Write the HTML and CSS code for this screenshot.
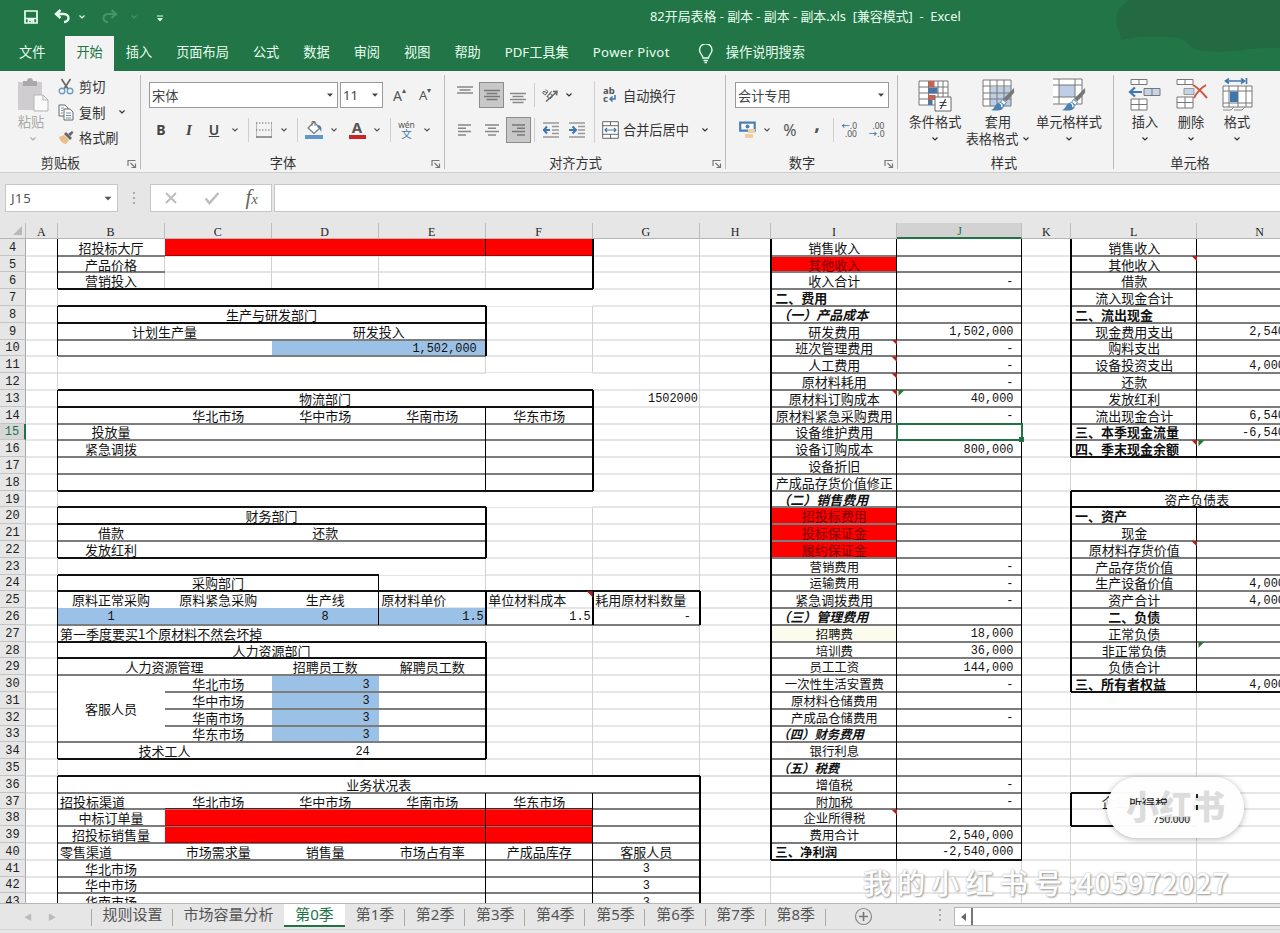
FILE: index.html
```html
<!DOCTYPE html>
<html lang="zh-CN">
<head>
<meta charset="utf-8">
<title>82开局表格 - Excel</title>
<link rel="stylesheet" href="styles.css">
</head>
<body>
<svg width="0" height="0" class="defs" aria-hidden="true">
  <symbol id="chev" viewBox="0 0 8 6"><path d="M1.5 1.5 4 4l2.500-2.500" fill="none" stroke="currentColor" stroke-width="1.200"/></symbol>
  <symbol id="tri" viewBox="0 0 8 6"><path d="M1 1.500h6L4 4.800z" fill="currentColor"/></symbol>
  <symbol id="launch" viewBox="0 0 10 10"><path d="M1 7V1.500h7.500M3.500 4l4 4M8.500 4.500v4h-4" fill="none" stroke="#777" stroke-width="1.200"/></symbol>
  <symbol id="brush" viewBox="0 0 26 26"><path d="M25 1v5l-8 9-3-3z" fill="#777"/><path d="M13 13l4 3-2 3-4-3z" fill="#fff" stroke="#4a86b8"/><path d="M1 24c4-1 4-7 9-8 3 0 5 2 4 5-1 4-9 4-13 3z" fill="#4a80b4"/><path d="M10 17c2 0 3 2 2 4" stroke="#fff" stroke-width="1.500" fill="none"/></symbol>
</svg>
<div class="app">
  <header class="title">
    <svg class="smudge" viewBox="0 0 190 60"><path d="M28 10 38 0h152v48c-30-2-45 6-75 3-20-2-15-12-28-13-22-3-38-2-56 2 0-10-8-14-3-30z" fill="#236a43"/></svg>
    <div class="quick">
      <svg width="14" height="14" viewBox="0 0 14 14"><path d="M1 1h12v12H1zM1 8.500h12M4.500 13v-3h5v3M7.500 10.500V13" fill="none" stroke="#e8fff0" stroke-width="1.700"/></svg>
      <svg width="17" height="15" viewBox="0 0 17 15"><path d="M2 5h8c6 0 6 8 0 8M6.500 1 2 5l4.500 4" fill="none" stroke="#e8fff0" stroke-width="2.400"/></svg>
      <svg class="c1" width="8" height="6"><use href="#chev"/></svg>
      <svg width="17" height="15" viewBox="0 0 17 15"><path d="M15 5H7c-6 0-6 8 0 8M10.500 1 15 5l-4.500 4" fill="none" stroke="#47946a" stroke-width="2.200"/></svg>
      <svg class="c2" width="8" height="6"><use href="#chev"/></svg>
      <svg width="8" height="7" viewBox="0 0 8 7"><path d="M1 1h6" stroke="#e8fff0"/><path d="M1 3h6L4 6.500z" fill="#e8fff0"/></svg>
    </div>
    <div class="doc">82开局表格 - 副本 - 副本 - 副本.xls&nbsp; [兼容模式]&nbsp; -&nbsp; Excel</div>
  </header>
  <nav class="tabs">
    <span>文件</span><span class="on">开始</span><span>插入</span><span>页面布局</span><span>公式</span><span>数据</span><span>审阅</span><span>视图</span><span>帮助</span><span>PDF工具集</span><span class="pp">Power Pivot</span>
    <svg width="16" height="20" viewBox="0 0 16 20"><path d="M5 14c0-3-3.500-4-3.500-8a6 6 0 0 1 12.500 0c0 4-3.500 5-3.500 8zM5.500 16.500h4.500M6.500 18.500h2.500" fill="none" stroke="#e8fff0" stroke-width="1.400"/></svg>
    <span>操作说明搜索</span>
  </nav>

  <section class="ribbon">
    <div class="group g-clip">
      <div class="body">
        <div class="big paste">
          <svg width="34" height="36" viewBox="0 0 34 36"><path d="M2 4h24v28H2z" fill="#cfcdd0"/><path d="M7 3h4c0-4 6-4 6 0h4v5H7z" fill="#a9a9a9"/><path d="M18 17h9l5 5v11H18z" fill="#fafafa" stroke="#b5b2b5"/><path d="M27 17v5h5" fill="none" stroke="#b5b2b5"/></svg>
          <b>粘贴</b><svg width="8" height="6"><use href="#chev"/></svg>
        </div>
        <div class="clips">
          <div><svg width="16" height="17" viewBox="0 0 16 17"><path d="M3.500 1 10 11M12.500 1 6 11" stroke="#666" stroke-width="1.600"/><circle cx="4" cy="13" r="2.800" fill="none" stroke="#6d9cc4" stroke-width="1.400"/><circle cx="12" cy="13" r="2.800" fill="none" stroke="#6d9cc4" stroke-width="1.400"/></svg>剪切</div>
          <div><svg width="16" height="17" viewBox="0 0 16 17"><path d="M1 1h6l3 3v8H1z" fill="#fff" stroke="#666"/><path d="M6 5h6l3 3v8H6z" fill="#fff" stroke="#666"/><path d="M3 4h3M3 6.500h2M3 9h2M8 9h5M8 11.500h5M8 14h5" stroke="#6d8fb5"/></svg>复制<svg class="far" width="8" height="6"><use href="#chev"/></svg></div>
          <div><svg width="16" height="15" viewBox="0 0 16 15"><path d="M1 7 6 5l5 5-3 4c-3 0-6-3-7-7z" fill="#eabf85"/><path d="M6 4l2-2 6 6-2 2z" fill="#666"/><path d="m10 4 4-3 1.500 1.500-3 3.500z" fill="#666"/></svg>格式刷</div>
        </div>
      </div>
      <div class="label"><span>剪贴板</span><svg width="10" height="10"><use href="#launch"/></svg></div>
    </div>

    <div class="group g-font">
      <div class="body stack">
        <div class="row1">
          <div class="combo fam">宋体<svg width="8" height="6"><use href="#tri"/></svg></div>
          <div class="combo size">11<svg width="8" height="6"><use href="#tri"/></svg></div>
          <div class="grow">A<sup>▴</sup></div><div class="grow shrink">A<sup>▾</sup></div>
        </div>
        <div class="row2 font-tools">
          <b class="fmt">B</b><b class="fmt it">I</b><b class="fmt un">U</b><svg width="8" height="6"><use href="#chev"/></svg><i class="sep"></i>
          <svg width="16" height="16" viewBox="0 0 16 16"><path d="M.5 0v15M15.500 0v15" stroke="#bbb"/><path d="M0 1h16M0 8h16" stroke="#777" stroke-dasharray="1.500 1.500"/><path d="M0 15h16" stroke="#777" stroke-width="1.500"/></svg>
          <svg width="8" height="6"><use href="#chev"/></svg><i class="sep"></i>
          <svg width="18" height="20" viewBox="0 0 18 20"><path d="m3 8 6-6 6 6-6 5.500z" fill="#fff" stroke="#777" stroke-width="1.200"/><path d="M7 6V1.500h3V6" fill="none" stroke="#777"/><path d="M13.500 5c3 1 3.500 4 2.500 7-1-3-2-4-4-5z" fill="#4a80b4"/><path d="M0 15h18v4H0z" fill="#5f97c8"/></svg>
          <svg width="8" height="6"><use href="#chev"/></svg>
          <b class="fcolor">A</b>
          <svg width="8" height="6"><use href="#chev"/></svg><i class="sep"></i>
          <div class="wen"><span>wén</span><em>文</em></div>
          <svg width="8" height="6"><use href="#chev"/></svg>
        </div>
      </div>
      <div class="label"><span>字体</span><svg width="10" height="10"><use href="#launch"/></svg></div>
    </div>

    <div class="group g-align">
      <div class="body">
        <div class="stack aleft">
          <div class="row1 al1">
            <svg class="up" width="16" height="14" viewBox="0 0 16 14"><path d="M0 2h16M2.500 5h11M0 8h16" stroke="#888" stroke-width="1.400"/></svg>
            <span class="hit"><svg width="16" height="14" viewBox="0 0 16 14"><path d="M0 2.500h16M2.500 5.500h11M0 8.500h16M2.500 11.500h11" stroke="#777" stroke-width="1.400"/></svg></span>
            <svg class="dn" width="16" height="14" viewBox="0 0 16 14"><path d="M0 2.500h16M2.500 5.500h11M0 8.500h16M2.500 11.500h11" stroke="#888" stroke-width="1.400"/></svg>
            <i class="sep"></i>
            <svg width="18" height="16" viewBox="0 0 18 16"><text x="0" y="9" transform="rotate(40 5 8)" class="ab">ab</text><path d="M5 14.500 15.500 5M12 4.500l4-.2-.5 4" fill="none" stroke="#666" stroke-width="1.500"/></svg>
            <svg width="8" height="6"><use href="#chev"/></svg>
          </div>
          <div class="row2 al2">
            <svg width="14" height="12" viewBox="0 0 14 12"><path d="M0 1h13M0 4.300h8M0 7.600h13M0 11h8" stroke="#888" stroke-width="1.500"/></svg>
            <svg width="14" height="12" viewBox="0 0 14 12"><path d="M0 1h14M3 4.300h8M0 7.600h14M3 11h8" stroke="#888" stroke-width="1.500"/></svg>
            <span class="hit"><svg width="14" height="12" viewBox="0 0 14 12"><path d="M1 1h13M6 4.300h8M1 7.600h13M6 11h8" stroke="#777" stroke-width="1.500"/></svg></span>
            <i class="sep"></i>
            <svg width="16" height="16" viewBox="0 0 16 16"><path d="M0 1h16M9 4.500h7M9 8h7M9 11.500h7M0 15h16" stroke="#999" stroke-width="1.500"/><path d="M0 8h7M4 4.500 .8 8 4 11.500" fill="none" stroke="#3f76ad" stroke-width="2"/></svg>
            <svg width="16" height="16" viewBox="0 0 16 16"><path d="M0 1h16M9 4.500h7M9 8h7M9 11.500h7M0 15h16" stroke="#999" stroke-width="1.500"/><path d="M0 8h7M3.500 4.500 7 8l-3.500 3.500" fill="none" stroke="#3f76ad" stroke-width="2"/></svg>
          </div>
        </div>
        <i class="vsep"></i>
        <div class="stack aright">
          <div class="row1 gap"><svg width="17" height="18" viewBox="0 0 17 18"><text x="1" y="8" class="ab2">ab</text><text x="1" y="16" class="ab2">c</text><path d="M13 9v4H8M10.500 10.500 8 13l2.500 2.500" fill="none" stroke="#3f76ad" stroke-width="1.500"/></svg>自动换行</div>
          <div class="row2 gap"><svg width="17" height="18" viewBox="0 0 17 18"><path d="M.7.700h15.600v16.600H.700zM.7 4.700h15.600M.7 13.300h15.600M8.500.700v4M8.500 13.300v4" fill="#fff" stroke="#666"/><path d="M3 9h11M5 7 3 9l2 2M12 7l2 2-2 2" fill="none" stroke="#3f76ad" stroke-width="1.200"/></svg>合并后居中<svg class="far" width="8" height="6"><use href="#chev"/></svg></div>
        </div>
      </div>
      <div class="label"><span>对齐方式</span><svg width="10" height="10"><use href="#launch"/></svg></div>
    </div>

    <div class="group g-num">
      <div class="body stack">
        <div class="row1"><div class="combo numf">会计专用<svg width="8" height="6"><use href="#tri"/></svg></div></div>
        <div class="row2 num-tools">
          <svg width="17" height="18" viewBox="0 0 17 18"><path d="M1.200 1.700h14.500v8H1.200z" fill="#fff" stroke="#4a80b4" stroke-width="2.200"/><circle cx="8.500" cy="5.500" r="2" fill="#4a80b4"/><path d="M9 8h7v4H9zM6 13h8v4H6z" fill="#efcf9e"/></svg>
          <svg width="8" height="6"><use href="#chev"/></svg><span class="pct">%</span><b class="com">,</b><i class="sep"></i>
          <div class="dec"><span><em>←</em>.0</span><span>.00</span></div>
          <div class="dec"><span>.00</span><span><em>→</em>.0</span></div>
        </div>
      </div>
      <div class="label"><span>数字</span><svg width="10" height="10"><use href="#launch"/></svg></div>
    </div>

    <div class="group g-style">
      <div class="body">
        <div class="big"><svg width="34" height="36" viewBox="0 0 34 36"><path d="M1 3h29v24H1zM1 9h29M1 15h29M1 21h29M10.500 3v24M20 3v24M25 3v24" fill="#fff" stroke="#777"/><path d="M10.500 3h6v6h-6zM10.500 17h7v5h-7z" fill="#c8604c"/><path d="M10.500 9.500h9v6h-9zM10.500 22h4v5h-4z" fill="#4a74a6"/><path d="M17 19h16v14H17z" fill="#fff" stroke="#666"/><path d="M21.500 24.500h7M21.500 27.500h7M27.500 21l-5 10" stroke="#444" stroke-width="1.200"/></svg><b>条件格式</b><svg width="8" height="6"><use href="#chev"/></svg></div>
        <div class="big"><svg width="34" height="36" viewBox="0 0 34 36"><path d="M2 2h28v26H2z" fill="#fff"/><path d="M9 9h21v19H9z" fill="#bccfe5"/><path d="M2 2h28v26H2zM2 8h28M2 15h28M2 21h28M9 2v26M16 2v26M23 2v26" fill="none" stroke="#777"/><use href="#brush" x="9" y="9" width="25" height="25"/></svg><b>套用</b><b class="l2">表格格式 <svg width="8" height="6"><use href="#chev"/></svg></b></div>
        <div class="big"><svg width="34" height="36" viewBox="0 0 34 36"><path d="M1 1h29v25H1z" fill="#fff"/><path d="M7 7h16v12H7z" fill="#bccfe5"/><path d="M1 1h29v25H1M1 7h29M1 19h29M7 1v25M23 1v25" fill="none" stroke="#777"/><use href="#brush" x="9" y="9" width="25" height="25"/></svg><b>单元格样式</b><svg width="8" height="6"><use href="#chev"/></svg></div>
      </div>
      <div class="label"><span>样式</span></div>
    </div>

    <div class="group g-cells">
      <div class="body">
        <div class="big"><svg width="34" height="36" viewBox="0 0 34 36"><path d="M3 1.500h16v5H3zM11 1.500v5M3 21h16v11H3zM3 26.500h16M11 21v11" fill="#fff" stroke="#777"/><path d="M16 10.500h16v7H16zM24 10.500v7" fill="#c4d5e7" stroke="#777"/><path d="M2 14h12M7 9.500 2 14l5 4.500" fill="none" stroke="#3f76ad" stroke-width="2.200"/></svg><b>插入</b><svg width="8" height="6"><use href="#chev"/></svg></div>
        <div class="big"><svg width="34" height="36" viewBox="0 0 34 36"><path d="M3 1.500h16v5H3zM11 1.500v5M3 19h16v11H3zM3 24.500h16M11 19v11" fill="#fff" stroke="#777"/><path d="M10 10.500h10v6H10z" fill="#c4d5e7" stroke="#999"/><path d="M19 7c5 3 9 7 14 13M32 7c-5 3-9 7-12 13" fill="none" stroke="#c9573f" stroke-width="2"/></svg><b>删除</b><svg width="8" height="6"><use href="#chev"/></svg></div>
        <div class="big"><svg width="34" height="36" viewBox="0 0 34 36"><path d="M6 3h18M9 .500 5.500 3 9 5.500M21 .500 24.500 3 21 5.500M26.500 0v6" fill="none" stroke="#3f76ad" stroke-width="1.600"/><path d="M3 8h29v21H3zM3 13h29M3 25h29M9 8v21M18 8v21M26 8v21" fill="#fff" stroke="#777"/><path d="M10 13.500h8V24h-8z" fill="#3f76ad"/><path d="M3 32h8l3-3M14 32h8l3-3" fill="none" stroke="#888"/></svg><b>格式</b><svg width="8" height="6"><use href="#chev"/></svg></div>
      </div>
      <div class="label"><span>单元格</span></div>
    </div>
  </section>

  <section class="fbar">
    <div class="namebox">J15<svg width="10" height="7"><use href="#tri"/></svg></div>
    <div class="dots"><i></i><i></i><i></i></div>
    <div class="fbtns">
      <svg width="14" height="14" viewBox="0 0 14 14"><path d="M2 2l10 10M12 2 2 12" stroke="#bdbdbd" stroke-width="2"/></svg>
      <svg width="16" height="14" viewBox="0 0 16 14"><path d="M1.500 7.500 5.500 12 14.500 2" fill="none" stroke="#bdbdbd" stroke-width="2.600"/></svg>
      <span class="fx">f<small>x</small></span>
    </div>
    <div class="finput"></div>
  </section>

  <main class="sheet" id="sheet"></main>

  <footer class="sheets">
    <span class="nav">◀</span><span class="nav">▶</span>
    <span class="tab t1">规则设置</span><span class="tab t2">市场容量分析</span><span class="tab cur">第0季</span><span class="tab">第1季</span><span class="tab">第2季</span><span class="tab">第3季</span><span class="tab">第4季</span><span class="tab">第5季</span><span class="tab">第6季</span><span class="tab">第7季</span><span class="tab">第8季</span>
    <svg class="plus" width="19" height="19" viewBox="0 0 19 19"><circle cx="9.500" cy="9.500" r="8" fill="none" stroke="#888" stroke-width="1.200"/><path d="M5 9.500h9M9.500 5v9" stroke="#777" stroke-width="1.600"/></svg>
    <div class="dots"><i></i><i></i><i></i></div>
    <div class="scroll"><svg width="5" height="8" viewBox="0 0 5 8"><path d="M5 0v8L0 4z" fill="#666"/></svg><i></i></div>
  </footer>

  <div class="wm">我的小红书号<span>:405972027</span></div>
  <div class="pill"><strong>小红书</strong><span class="f1">所得税</span><span class="f2">750,000</span><i class="m1"></i></div>
</div>
<script src="sheet.js"></script>
</body>
</html>
```
FILE: sheet.js
```js
const sheet = document.getElementById('sheet');
const COLS = ['#', 'A', 'B', 'C', 'D', 'E', 'F', 'G', 'H', 'I', 'J', 'K', 'L', 'N'];
const ci = c => COLS.indexOf(c) + 1;
const ri = r => r - 2;

function put(c1, r1, c2, r2, cls, text) {
  const el = document.createElement('div');
  el.className = cls;
  el.style.gridArea = `${ri(r1)} / ${ci(c1)} / ${ri(r2) + 1} / ${ci(c2) + 1}`;
  if (text !== undefined) el.textContent = text;
  sheet.appendChild(el);
}
const fill = (c1, r1, c2, r2, cls) => put(c1, r1, c2, r2, 'fill ' + cls);
const h = (rows, c1, c2, cls) => [].concat(rows).forEach(r => put(c1, r, c2, r, 'h ' + cls));
const v = (c, r1, r2, cls) => put(c, r1, c, r2, 'v ' + cls);
const t = (c, r, text, cls = '', c2 = c, r2 = r) => put(c, r, c2, r2, 'cell ' + cls, text);
const range = (a, b) => Array.from({ length: b - a + 1 }, (_, i) => a + i);

// default gridlines
h(range(4, 42), 'A', 'N', 'grid');
COLS.slice(1, 13).forEach(c => v(c, 4, 43, 'grid'));

// areas without gridlines
[['B', 7, 'F', 7], ['B', 8, 'E', 11], ['B', 12, 'F', 19], ['B', 20, 'E', 23], ['B', 24, 'D', 24],
 ['B', 25, 'D', 25], ['B', 27, 'E', 35], ['B', 36, 'G', 43], ['L', 19, 'N', 19], ['B', 4, 'B', 6]]
  .forEach(a => fill(...a, 'white'));
h([7, 11, 18, 22, 34], 'B', 'E', 'grid');
v('E', 11, 11, 'grid'); v('E', 23, 23, 'grid'); v('E', 27, 27, 'grid'); v('E', 35, 35, 'grid');
['A'].forEach(c => v(c, 4, 43, 'grid'));
v('B', 5, 6, 'grid');

// coloured cells
fill('C', 4, 'F', 4, 'red'); fill('D', 10, 'E', 10, 'blue');
fill('B', 26, 'E', 26, 'blue'); fill('D', 30, 'D', 33, 'blue');
fill('C', 38, 'F', 39, 'red'); fill('I', 5, 'I', 5, 'red'); fill('I', 20, 'I', 22, 'red');
fill('I', 27, 'I', 27, 'cream');

// table borders
h([4, 5], 'B', 'B', 'g'); h(4, 'C', 'F', 'dr'); v('E', 4, 4, 'k1'); h(6, 'B', 'F', 'k');
v('A', 4, 6, 'k1'); v('F', 4, 6, 'k2');
h([7, 8], 'B', 'E', 'k'); h([9, 10], 'B', 'E', 'g'); v('A', 8, 10, 'k1'); v('E', 8, 10, 'k2');
h([12, 13, 18], 'B', 'F', 'k'); h([14, 15, 16, 17], 'B', 'F', 'g');
v('A', 13, 18, 'k1'); v('E', 14, 18, 'k1'); v('F', 13, 18, 'k2');
h([19, 20, 22], 'B', 'E', 'k'); h(21, 'B', 'E', 'g'); v('A', 20, 22, 'k1'); v('E', 20, 22, 'k2');
h(23, 'B', 'D', 'k'); h(24, 'B', 'G', 'k'); h(26, 'B', 'G', 'g'); v('A', 24, 26, 'k1');
v('D', 24, 26, 'k1'); v('E', 25, 26, 'k2'); v('F', 25, 26, 'k2'); v('G', 25, 26, 'k2');
h([27, 28, 34], 'B', 'E', 'k'); h([29, 33], 'B', 'E', 'g'); h([30, 31, 32], 'C', 'E', 'g');
v('A', 27, 34, 'k1'); v('E', 28, 34, 'k2');
h(35, 'B', 'G', 'k'); h(range(36, 42), 'B', 'G', 'g'); h([37, 38, 39], 'C', 'F', 'dr');
v('A', 36, 43, 'k1'); v('E', 37, 43, 'k1'); v('F', 37, 43, 'k1'); v('G', 36, 43, 'k2');
h(range(4, 39), 'I', 'J', 'g'); h(40, 'I', 'J', 'k');
v('H', 4, 40, 'k2'); v('I', 4, 40, 'k1'); v('J', 4, 40, 'k1');
h(range(4, 15), 'L', 'N', 'g'); h([16, 18, 19, 30], 'L', 'N', 'k'); h(range(20, 29), 'L', 'N', 'g');
v('K', 4, 16, 'k2'); v('L', 4, 16, 'k1'); v('K', 19, 30, 'k2'); v('L', 20, 30, 'k1');
h([36, 38], 'L', 'L', 'k'); v('K', 37, 38, 'k2');

// left-hand tables
t('B', 4, '招投标大厅'); t('B', 5, '产品价格'); t('B', 6, '营销投入');
t('B', 8, '生产与研发部门', '', 'E'); t('B', 9, '计划生产量', '', 'C'); t('D', 9, '研发投入', '', 'E');
t('E', 10, '1,502,000', 'num');
t('G', 13, '1502000', 'num tight');
t('B', 13, '物流部门', '', 'F');
[14, 37].forEach(r => ['华北市场', '华中市场', '华南市场', '华东市场'].forEach((s, i) => t('CDEF'[i], r, s)));
t('B', 15, '投放量'); t('B', 16, '紧急调拨');
t('B', 20, '财务部门', '', 'E'); t('B', 21, '借款'); t('D', 21, '还款'); t('B', 22, '发放红利');
t('B', 24, '采购部门', '', 'D'); t('B', 25, '原料正常采购'); t('C', 25, '原料紧急采购'); t('D', 25, '生产线');
t('E', 25, '原材料单价', 'left'); t('F', 25, '单位材料成本', 'left'); t('G', 25, '耗用原材料数量', 'left');
t('B', 26, '1', 'mid'); t('D', 26, '8', 'mid'); t('E', 26, '1.5', 'num tight'); t('F', 26, '1.5', 'num tight'); t('G', 26, '-', 'num');
t('B', 27, '第一季度要买1个原材料不然会坏掉', 'left', 'D');
t('B', 28, '人力资源部门', '', 'E'); t('B', 29, '人力资源管理', '', 'C'); t('D', 29, '招聘员工数'); t('E', 29, '解聘员工数');
['华北市场', '华中市场', '华南市场', '华东市场'].forEach((s, i) => { t('C', 30 + i, s); t('D', 30 + i, '3', 'num'); });
t('B', 30, '客服人员', '', 'B', 33); t('B', 34, '技术工人', '', 'C'); t('D', 34, '24', 'num');
t('B', 36, '业务状况表', '', 'G'); t('B', 37, '招投标渠道', 'left'); t('B', 38, '中标订单量'); t('B', 39, '招投标销售量');
t('B', 40, '零售渠道', 'left'); t('C', 40, '市场需求量'); t('D', 40, '销售量'); t('E', 40, '市场占有率'); t('F', 40, '产成品库存'); t('G', 40, '客服人员');
['华北市场', '华中市场', '华南市场'].forEach((s, i) => { t('B', 41 + i, s); t('G', 41 + i, '3', 'mid'); });

// income statement
[['销售收入'], ['其他收入', '', 'onred'], ['收入合计', '-'], ['二、费用', '', 'head'], ['（一）产品成本', '', 'sub'],
 ['研发费用', '1,502,000'], ['班次管理费用', '-'], ['人工费用', '-'], ['原材料耗用', '-'], ['原材料订购成本', '40,000'],
 ['原材料紧急采购费用', '-'], ['设备维护费用'], ['设备订购成本', '800,000'], ['设备折旧'], ['产成品存货价值修正'],
 ['（二）销售费用', '', 'sub'], ['招投标费用', '', 'onred'], ['投标保证金', '', 'onred'], ['履约保证金', '', 'onred'],
 ['营销费用', '-', 'sm'], ['运输费用', '-', 'sm'], ['紧急调拨费用', '-'], ['（三）管理费用', '', 'sub'], ['招聘费', '18,000', 'sm'],
 ['培训费', '36,000', 'sm'], ['员工工资', '144,000', 'sm'], ['一次性生活安置费', '-', 'sm'], ['原材料仓储费用', '', 'sm'],
 ['产成品仓储费用', '-', 'sm'], ['（四）财务费用', '', 'sub sm'], ['银行利息', '', 'sm'], ['（五）税费', '', 'sub sm'],
 ['增值税', '-', 'sm'], ['附加税', '-', 'sm'], ['企业所得税', '', 'sm'], ['费用合计', '2,540,000', 'sm'], ['三、净利润', '-2,540,000', 'head sm']]
  .forEach(([name, val, cls], i) => { t('I', 4 + i, name, cls); if (val) t('J', 4 + i, val, 'num'); });

// cash flow and balance sheet
[['销售收入'], ['其他收入'], ['借款'], ['流入现金合计'], ['二、流出现金', '', 'head'], ['现金费用支出', '2,540,000'], ['购料支出'],
 ['设备投资支出', '4,000,000'], ['还款'], ['发放红利'], ['流出现金合计', '6,540,000'], ['三、本季现金流量', '-6,540,000', 'head'], ['四、季末现金余额', '', 'head']]
  .forEach(([name, val, cls], i) => { t('L', 4 + i, name, cls); if (val) t('N', 4 + i, val, 'num'); });
t('L', 19, '资产负债表', '', 'N');
[['一、资产', '', 'head'], ['现金'], ['原材料存货价值'], ['产品存货价值'], ['生产设备价值', '4,000,000'], ['资产合计', '4,000,000'],
 ['二、负债', '', 'bold'], ['正常负债'], ['非正常负债'], ['负债合计'], ['三、所有者权益', '4,000,000', 'head']]
  .forEach(([name, val, cls], i) => { t('L', 20 + i, name, cls); if (val) t('N', 20 + i, val, 'num'); });
t('L', 37, '企业所得税');

// comment and error markers
[['I', 10], ['I', 11], ['I', 12], ['I', 13], ['I', 38], ['L', 5], ['L', 16], ['L', 22], ['F', 25]]
  .forEach(([c, r]) => put(c, r, c, r, 'mark note'));
[['J', 13], ['N', 16], ['N', 28]].forEach(([c, r]) => put(c, r, c, r, 'mark err'));
put('J', 15, 'J', 15, 'selection');

// headers
put('#', 3, '#', 3, 'ch corner');
COLS.slice(1).forEach(c => put(c, 3, c, 3, 'ch' + (c === 'J' ? ' act' : '') + (c === 'B' || c === 'K' || c === 'A' ? ' bar' : ''), c));
range(4, 43).forEach(r => put('#', r, '#', r, 'rh' + (r === 15 ? ' act' : ''), r));
```
FILE: styles.css
```css
* { box-sizing: border-box; }
body { margin: 0; font-family: "Noto Sans", "Noto Sans CJK SC", sans-serif; font-size: 13.2px; color: #333; }
svg { display: block; flex: none; }
.defs { position: absolute; }
.app { position: relative; width: 1280px; height: 933px; overflow: hidden; background: #e6e6e6; display: flex; flex-direction: column; }

.title { position: relative; height: 36px; background: #217546; flex: none; color: #e8fff0; display: flex; align-items: center; }
.smudge { position: absolute; right: 0; top: 0; width: 190px; height: 60px; z-index: 1; }
.quick { display: flex; align-items: center; padding: 0 0 3px 24px; width: 650px; }
.quick svg:nth-child(2) { margin-left: 16px; }
.quick .c1 { margin: 0 15px 0 7px; }
.quick .c2 { margin: 0 14px 0 12px; color: #47946a; }
.quick svg:last-child { margin-left: 4px; margin-top: 4px; }
.doc { font-size: 12.9px; white-space: nowrap; padding-bottom: 5px; }

.tabs { height: 35px; background: #217546; flex: none; display: flex; align-items: stretch; color: #e8fff0; padding-left: 8px; }
.tabs span { padding: 0 12px; line-height: 33px; white-space: nowrap; font-size: 13.2px; }
.tabs span:first-child { padding-right: 20px; padding-left: 11px; }
.tabs .on { background: #f3f3f3; color: #217546; padding: 0 11px; }
.tabs svg { margin: 8px 0 0 16px; }
.tabs .pp { letter-spacing: .35px; }

.ribbon { height: 102px; flex: none; display: flex; background: #f3f3f3; border-bottom: 1px solid #cfcfcf; }
.group { position: relative; display: flex; flex-direction: column; flex: none; padding-top: 3px; color: #333; }
.group:not(.g-cells)::after { content: ""; position: absolute; right: 0; top: 4px; height: 94px; width: 1px; background: #bbb; }
.g-clip { width: 141px; } .g-font { width: 304px; } .g-align { width: 281px; } .g-num { width: 172px; } .g-style { width: 216px; } .g-cells { width: 166px; }
.body { height: 78px; display: flex; }
.stack { display: flex; flex-direction: column; }
.label { height: 20px; display: flex; align-items: center; padding-right: 4px; }
.label span { flex: 1; text-align: center; white-space: nowrap; padding-left: 0; }
.label svg { margin-top: 3px; }
.g-clip .label span, .g-font .label span, .g-align .label span, .g-num .label span { padding-right: 6px; }
.g-cells .label { padding-right: 14px; }
.row1 { height: 42px; display: flex; align-items: center; }
.row2 { height: 27px; display: flex; align-items: center; }
.gap { gap: 4px; padding-left: 7px; white-space: nowrap; }
.gap .far { margin-left: 8px; }
.big { display: flex; flex-direction: column; align-items: center; padding-top: 4px; }
.big b { font-weight: 400; line-height: 18px; height: 18px; white-space: nowrap; margin-top: -1px; }
.big > svg:last-child { margin-top: 5px; }
.big .l2 { display: flex; align-items: center; gap: 4px; }
.paste { width: 58px; padding-left: 8px; color: #aaa; }
.paste b { padding-right: 4px; }
.clips { display: flex; flex-direction: column; }
.clips div { height: 25.500px; display: flex; align-items: center; gap: 5px; }
.clips .far { margin-left: 8px; }

.combo { height: 26px; border: 1px solid #999; background: #fff; display: flex; align-items: center; justify-content: space-between; padding: 0 3px 0 2px; color: #444; }
.fam { width: 189px; margin-left: 8px; } .size { width: 43px; margin: 0 10px 0 2px; } .numf { width: 154px; margin-left: 9px; }
.grow { width: 26px; color: #555; font-size: 14px; display: flex; }
.grow sup { font-size: 8px; line-height: 8px; }
.shrink { font-size: 13px; }
.font-tools { display: grid; justify-items: center; margin-left: 8px; grid-template-columns: 24px 32px 18px 24px 3px 28px 12px 15px 18px 22px 24px 16px 10px 23px 18px; color: #555; }
.fmt { font-size: 14px; color: #444; line-height: 18px; }
.it { font-style: italic; font-family: "Liberation Serif", serif; font-size: 15px; } .un { text-decoration: underline; font-weight: 600; }
.sep { width: 1px; height: 24px; background: #cfcfcf; }
.vsep { width: 1px; height: 62px; background: #cfcfcf; margin-top: 7px; }
.fcolor { width: 17px; border-bottom: 4px solid #cc2222; text-align: center; line-height: 15px; font-size: 15px; color: #555; }
.wen { display: flex; flex-direction: column; align-items: center; font-size: 8.500px; line-height: 8px; color: #555; }
.wen em { font-style: normal; color: #3f76ad; font-size: 10.500px; line-height: 10px; }
.aleft { width: 149px; padding-left: 9px; }
.al1, .al2 { display: grid; justify-items: center; }
.al1 { grid-template-columns: 22px 31px 22px 11px 20px 18px; }
.al2 { grid-template-columns: 22px 32px 20px 13px 20px 32px; }
.hit { width: 25px; height: 26px; background: #c8c8c8; border: 1px solid #8c8c8c; display: grid; place-items: center; }
.up { margin-bottom: 6px; } .dn { margin-top: 6px; }
.ab { font: 10px "Noto Sans", sans-serif; fill: #555; }
.ab2 { font: bold 9.500px "Noto Sans", sans-serif; fill: #555; }
.num-tools { display: grid; justify-items: center; margin-left: 9px; grid-template-columns: 24px 16px 30px 24px 9px 23px 32px; color: #555; }
.pct { font-size: 16px; } .com { font-size: 20px; line-height: 10px; margin-top: -14px; }
.dec { display: flex; flex-direction: column; align-items: flex-end; font-size: 8.500px; line-height: 8px; width: 15px; }
.dec span { white-space: nowrap; display: flex; }
.dec em { color: #3f76ad; font-style: normal; font-weight: 700; }
.g-style .big:nth-child(1) { width: 74px; } .g-style .big:nth-child(2) { width: 52px; } .g-style .big:nth-child(3) { width: 90px; }
.g-cells .body { padding-left: 8px; } .g-cells .big { width: 46px; }

.fbar { height: 50px; flex: none; display: flex; align-items: center; padding-left: 5px; }
.namebox, .fbtns, .finput { height: 28px; background: #fff; border: 1px solid #c6c6c6; display: flex; align-items: center; }
.namebox { width: 113px; padding: 0 4px 0 5px; justify-content: space-between; color: #555; letter-spacing: .5px; }
.dots { width: 32px; display: flex; flex-direction: column; align-items: center; gap: 3px; }
.dots i { width: 2px; height: 2px; background: #aaa; }
.fbtns { width: 122px; justify-content: space-between; padding: 0 13px; }
.fx { font: italic 21px "Liberation Serif", serif; color: #666; line-height: 20px; } .fx small { font-size: 15px; }
.finput { margin-left: 2px; flex: 1; border-right: 0; }

.sheet { height: 680px; flex: none; overflow: hidden; background: #fff; display: grid; justify-content: start; align-content: start;
  grid-template-columns: 26px 31.500px 107.200px 107px 107px 107px 107px 107.300px 71.300px 126.200px 125px 48.500px 126.500px 125px;
  grid-template-rows: 16px 16.700px repeat(39, 16.790px);
  font-family: "Noto Sans CJK SC", sans-serif; font-size: 13px; color: #111; }
.sheet > div { min-width: 0; min-height: 0; }
.fill.white { background: #fff; } .fill.red { background: #fe0000; } .fill.blue { background: #9bc2e6; } .fill.cream { background: #fbfbee; }
.h { height: 2px; align-self: end; margin-bottom: -1px; }
.v { width: 2px; justify-self: end; margin-right: -1px; }
.h.grid { background: #e6e6e6; } .v.grid { width: 1px; background: #d2d2d2; margin-right: 0; }
.h.g { background: #7c7c7c; } .h.k { background: #111; } .h.dr { background: #a00000; height: 1px; margin-bottom: 0; }
.v.k1 { width: 1px; background: #000; margin-right: 0; } .v.k2 { background: #000; }
.cell { display: flex; align-items: center; justify-content: center; white-space: nowrap; line-height: 16px; padding-top: 1px; }
.left { justify-content: flex-start; padding-left: 2.500px; }
.num, .mid { font-family: "Liberation Mono", monospace; font-size: 11.900px; padding-top: 2px; }
.num { justify-content: flex-end; padding-right: 9px; }
.num.tight { padding-right: 2px; }
.head { font-weight: 700; justify-content: flex-start; padding-left: 4px; }
.bold { font-weight: 700; }
.sub { font-weight: 700; font-style: italic; justify-content: flex-start; padding-left: 6px; }
.sm { font-size: 12.400px; }
.onred { color: #7a0000; }
.mark { width: 6px; height: 6px; }
.note { justify-self: end; background: #b01e1e; clip-path: polygon(0 0, 100% 0, 100% 100%); }
.err { background: #1e7a2c; clip-path: polygon(0 0, 100% 0, 0 100%); margin-left: 1px; }
.selection { border: 2px solid #217346; margin: -1px -1px -1px -1px; position: relative; }
.selection::after { content: ""; position: absolute; right: -3px; bottom: -3px; width: 5px; height: 5px; background: #217346; }
.ch, .rh { background: #e6e6e6; display: flex; align-items: center; justify-content: center; font-size: 12px; color: #222; }
.ch { font-family: "Liberation Serif", serif; border-right: 1px solid #bdbdbd; border-bottom: 1px solid #b5b5b5; padding-top: 3px; }
.ch.act { background: #d2d2d2; color: #217346; border-bottom: 2px solid #217346; }
.corner { position: relative; }
.corner::after { content: ""; position: absolute; right: 3px; bottom: 3px; width: 9px; height: 9px; background: #b8b8b8; clip-path: polygon(100% 0, 100% 100%, 0 100%); }
.rh { font-family: "Liberation Mono", monospace; border-right: 1px solid #a8a8a8; border-bottom: 1px solid #c4c4c4; padding-top: 2px; line-height: 14px; }
.rh.act { background: #d6d6d6; color: #217346; border-right: 2px solid #217346; }

.sheets { height: 27px; flex: none; display: flex; border-top: 1px solid #b5b5b5; border-bottom: 1px solid #d4d4d4; background: #e6e6e6; color: #555; font-size: 15px; }
.nav { width: 24px; font-size: 8px; color: #b9b9b9; text-align: center; line-height: 25px; }
.nav:first-child { margin-left: 16px; }
.tab { width: 60.100px; text-align: center; line-height: 20px; height: 23px; white-space: nowrap; display: flex; justify-content: center; position: relative; }
.tab::after { content: ""; position: absolute; right: 0; top: 5px; height: 17px; width: 1px; background: #aaa; }
.t1 { width: 81px; margin-left: 28px; } .t1::before { content: ""; position: absolute; left: -1px; top: 5px; height: 17px; width: 1px; background: #aaa; }
.t2 { width: 111px; } .t2::after, .cur::after { display: none; }
.tab.cur { width: 61px; background: #fff; color: #217346; border-bottom: 2px solid #217346; }
.plus { margin: 3px 0 0 28px; }
.sheets .dots { margin: 5px 0 0 51px; height: 14px; }
.scroll { margin: 3px 0 0 -2px; height: 19px; flex: 1; border: 1px solid #b5b5b5; border-right: 0; background: #fff; display: flex; align-items: center; padding-left: 6px; }
.scroll i { width: 2px; height: 17px; background: #777; margin-left: 5px; }

.wm { position: absolute; left: 863px; top: 862px; font-family: "Noto Sans CJK SC", sans-serif; font-weight: 500; font-size: 28px; line-height: 40px; letter-spacing: 6.200px; color: #fff; white-space: nowrap; text-shadow: 1px 1px 2px #999, 0 0 2px #aaa; }
.wm span { letter-spacing: .9px; font-size: 28px; }
.pill { position: absolute; left: 1107px; top: 777px; width: 137px; height: 61px; border-radius: 31px; background: rgba(254, 254, 254, .98); box-shadow: 0 1px 6px rgba(0, 0, 0, .3); }
.pill strong { position: absolute; left: 19px; top: 8px; font-size: 33px; line-height: 44px; color: #dcdcdc; font-weight: 900; }
.f1, .f2 { position: absolute; font-size: 13px; color: #222; line-height: 14px; white-space: nowrap; }
.f1 { left: 22px; top: 18px; clip-path: inset(3px 0 4px 0); }
.f2 { left: 46px; top: 35px; font-size: 10px; clip-path: inset(5px 0 3px 0); }
.m1 { position: absolute; left: 89px; top: 17px; width: 2px; height: 16px; background: linear-gradient(#222 4px, transparent 4px 11px, #222 11px); }
```
